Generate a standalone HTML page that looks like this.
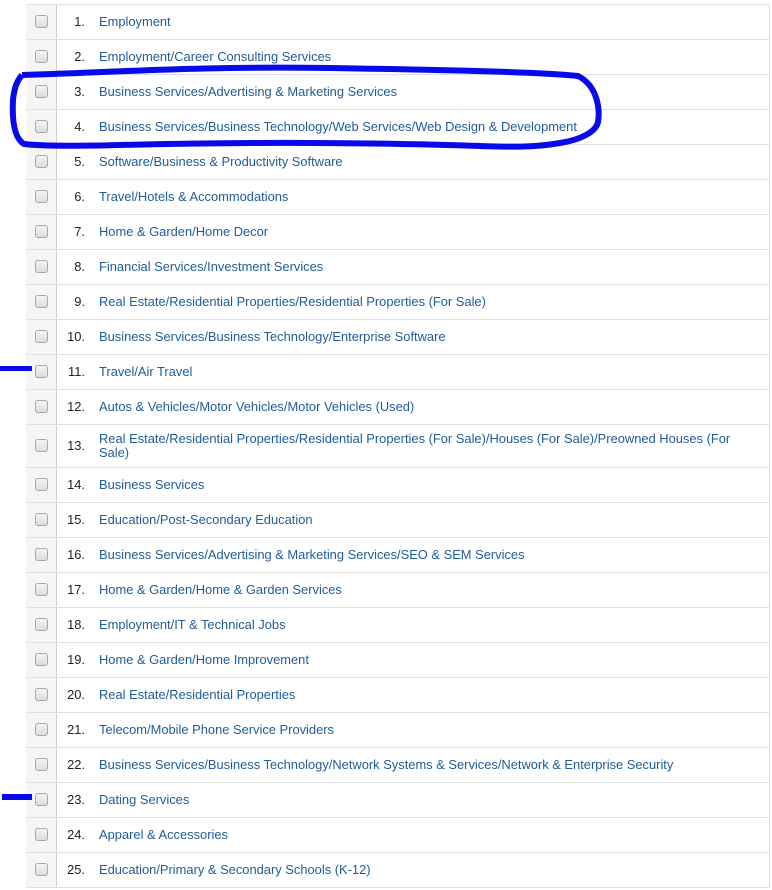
<!DOCTYPE html>
<html><head><style>
body{margin:0;width:772px;height:890px;background:#fff;position:relative;overflow:hidden;font-family:"Liberation Sans",Arial,sans-serif;font-size:12.9px}
.tbl{position:absolute;left:26px;top:4px;width:743px;border-right:1px solid #e0e0e0;border-top:1px solid #e0e0e0}
.r{display:flex;height:34px;border-bottom:1px solid #e0e0e0;align-items:center;line-height:14px}
.r.t{height:42px}
.c{width:30px;height:100%;background:#f5f5f5;border-right:1px solid #d0d0d0;position:relative;flex:none}
.c i{position:absolute;left:9px;top:50%;margin-top:-7px;width:11px;height:11px;border:1px solid #a8a8a8;border-radius:3px;background:linear-gradient(#f4f4f4,#dcdcdc)}
.n{width:28px;text-align:right;color:#222;flex:none}
.l{margin-left:14px;color:#1f5c99;padding-right:10px}
</style></head><body>
<div class="tbl">
<div class="r"><div class="c"><i></i></div><div class="n">1.</div><div class="l">Employment</div></div>
<div class="r"><div class="c"><i></i></div><div class="n">2.</div><div class="l">Employment/Career Consulting Services</div></div>
<div class="r"><div class="c"><i></i></div><div class="n">3.</div><div class="l">Business Services/Advertising &amp; Marketing Services</div></div>
<div class="r"><div class="c"><i></i></div><div class="n">4.</div><div class="l">Business Services/Business Technology/Web Services/Web Design &amp; Development</div></div>
<div class="r"><div class="c"><i></i></div><div class="n">5.</div><div class="l">Software/Business &amp; Productivity Software</div></div>
<div class="r"><div class="c"><i></i></div><div class="n">6.</div><div class="l">Travel/Hotels &amp; Accommodations</div></div>
<div class="r"><div class="c"><i></i></div><div class="n">7.</div><div class="l">Home &amp; Garden/Home Decor</div></div>
<div class="r"><div class="c"><i></i></div><div class="n">8.</div><div class="l">Financial Services/Investment Services</div></div>
<div class="r"><div class="c"><i></i></div><div class="n">9.</div><div class="l">Real Estate/Residential Properties/Residential Properties (For Sale)</div></div>
<div class="r"><div class="c"><i></i></div><div class="n">10.</div><div class="l">Business Services/Business Technology/Enterprise Software</div></div>
<div class="r"><div class="c"><i></i></div><div class="n">11.</div><div class="l">Travel/Air Travel</div></div>
<div class="r"><div class="c"><i></i></div><div class="n">12.</div><div class="l">Autos &amp; Vehicles/Motor Vehicles/Motor Vehicles (Used)</div></div>
<div class="r t"><div class="c"><i></i></div><div class="n">13.</div><div class="l">Real Estate/Residential Properties/Residential Properties (For Sale)/Houses (For Sale)/Preowned Houses (For<br>Sale)</div></div>
<div class="r"><div class="c"><i></i></div><div class="n">14.</div><div class="l">Business Services</div></div>
<div class="r"><div class="c"><i></i></div><div class="n">15.</div><div class="l">Education/Post-Secondary Education</div></div>
<div class="r"><div class="c"><i></i></div><div class="n">16.</div><div class="l">Business Services/Advertising &amp; Marketing Services/SEO &amp; SEM Services</div></div>
<div class="r"><div class="c"><i></i></div><div class="n">17.</div><div class="l">Home &amp; Garden/Home &amp; Garden Services</div></div>
<div class="r"><div class="c"><i></i></div><div class="n">18.</div><div class="l">Employment/IT &amp; Technical Jobs</div></div>
<div class="r"><div class="c"><i></i></div><div class="n">19.</div><div class="l">Home &amp; Garden/Home Improvement</div></div>
<div class="r"><div class="c"><i></i></div><div class="n">20.</div><div class="l">Real Estate/Residential Properties</div></div>
<div class="r"><div class="c"><i></i></div><div class="n">21.</div><div class="l">Telecom/Mobile Phone Service Providers</div></div>
<div class="r"><div class="c"><i></i></div><div class="n">22.</div><div class="l">Business Services/Business Technology/Network Systems &amp; Services/Network &amp; Enterprise Security</div></div>
<div class="r"><div class="c"><i></i></div><div class="n">23.</div><div class="l">Dating Services</div></div>
<div class="r"><div class="c"><i></i></div><div class="n">24.</div><div class="l">Apparel &amp; Accessories</div></div>
<div class="r"><div class="c"><i></i></div><div class="n">25.</div><div class="l">Education/Primary &amp; Secondary Schools (K-12)</div></div>
</div>
<svg width="772" height="890" style="position:absolute;left:0;top:0">
<path d="M22 75 C120 72 200 66 330 68 C450 70 540 72 578 76 C598 86 600 110 598 122 C596 132 580 140 560 143 C520 150 490 145 400 144 C300 142 200 143 120 145 C80 146 40 146 24 144 C14 138 12 120 13 100 C14 90 16 82 22 75" fill="none" stroke="#0a0ae8" stroke-width="6" stroke-linejoin="round"/>
<rect x="0" y="366" width="32" height="5" fill="#0a0ae8"/>
<rect x="2" y="794" width="30" height="6" fill="#0a0ae8"/>
</svg>
</body></html>
